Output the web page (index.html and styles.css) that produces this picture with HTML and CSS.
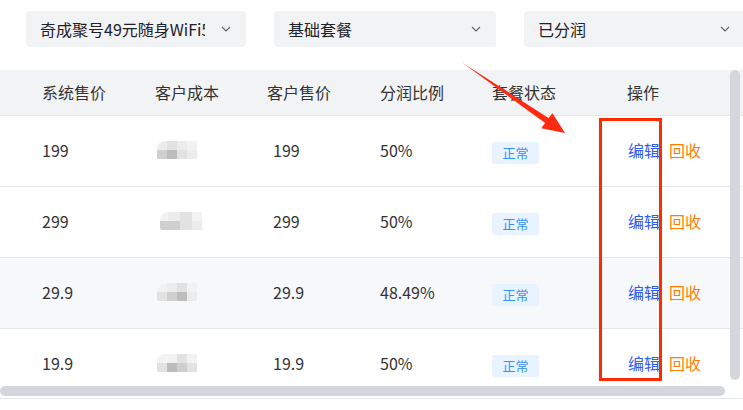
FILE: index.html
```html
<!DOCTYPE html>
<html lang="zh-CN">
<head>
<meta charset="utf-8">
<title>套餐列表</title>
<link rel="stylesheet" href="styles.css">
</head>
<body>
<div class="page">
  <div class="filters">
    <div class="select s1"><span class="select-text">奇成聚号49元随身WiFi5G套餐</span><svg class="chev" viewBox="0 0 10 6" width="10" height="6"><path d="M1 1l4 4 4-4" fill="none" stroke="#666" stroke-width="1.2"/></svg></div>
    <div class="select s2"><span class="select-text">基础套餐</span><svg class="chev" viewBox="0 0 10 6" width="10" height="6"><path d="M1 1l4 4 4-4" fill="none" stroke="#666" stroke-width="1.2"/></svg></div>
    <div class="select s3"><span class="select-text">已分润</span><svg class="chev" viewBox="0 0 10 6" width="10" height="6"><path d="M1 1l4 4 4-4" fill="none" stroke="#666" stroke-width="1.2"/></svg></div>
  </div>

  <div class="table-wrap">
    <div class="row head">
      <div class="cell">系统售价</div>
      <div class="cell">客户成本</div>
      <div class="cell">客户售价</div>
      <div class="cell">分润比例</div>
      <div class="cell">套餐状态</div>
      <div class="cell">操作</div>
    </div>
    <div class="row">
      <div class="cell">199</div>
      <div class="cell"><span class="blur b1"><i class="l"></i><i class="m"></i><i class="l"></i><i class="n"></i><i class="d"></i><i class="k"></i><i class="m"></i><i class="l"></i></span></div>
      <div class="cell shift">199</div>
      <div class="cell">50%</div>
      <div class="cell tagcell"><span class="tag">正常</span></div>
      <div class="cell ops"><span class="edit">编辑</span><span class="recycle">回收</span></div>
    </div>
    <div class="row">
      <div class="cell">299</div>
      <div class="cell"><span class="blur b2"><i class="n"></i><i class="l"></i><i class="m"></i><i class="n"></i><i class="d"></i><i class="d"></i><i class="m"></i><i class="l"></i></span></div>
      <div class="cell shift">299</div>
      <div class="cell">50%</div>
      <div class="cell tagcell"><span class="tag">正常</span></div>
      <div class="cell ops"><span class="edit">编辑</span><span class="recycle">回收</span></div>
    </div>
    <div class="row striped">
      <div class="cell">29.9</div>
      <div class="cell"><span class="blur b3"><i class="n"></i><i class="l"></i><i class="m"></i><i class="n"></i><i class="m"></i><i class="d"></i><i class="k"></i><i class="l"></i></span></div>
      <div class="cell shift">29.9</div>
      <div class="cell">48.49%</div>
      <div class="cell tagcell"><span class="tag">正常</span></div>
      <div class="cell ops"><span class="edit">编辑</span><span class="recycle">回收</span></div>
    </div>
    <div class="row">
      <div class="cell">19.9</div>
      <div class="cell"><span class="blur b4"><i class="n"></i><i class="n"></i><i class="m"></i><i class="n"></i><i class="m"></i><i class="k"></i><i class="d"></i><i class="m"></i></span></div>
      <div class="cell shift">19.9</div>
      <div class="cell">50%</div>
      <div class="cell tagcell"><span class="tag">正常</span></div>
      <div class="cell ops"><span class="edit">编辑</span><span class="recycle">回收</span></div>
    </div>
    <div class="hscroll"></div>
    <div class="vscroll"></div>
  </div>

  <div class="highlight"></div>
  <svg class="arrow" width="743" height="410" viewBox="0 0 743 410">
    <polygon points="462,62.5 548.5,118.1 552.5,113.2 565,133 541.2,128.2 545.1,123.1" fill="#ff2a10"/>
  </svg>
</div>
</body>
</html>
```

FILE: styles.css
```css
html, body {
  margin: 0;
  padding: 0;
  background: #fff;
  overflow: hidden;
}
.page {
  position: relative;
  width: 743px;
  height: 410px;
  font-family: "Noto Sans CJK SC", "Noto Sans", sans-serif;
  color: #333;
  font-size: 16px;
}
.filters {
  display: flex;
  padding: 11px 0 0 26px;
  gap: 28px;
  white-space: nowrap;
}
.select {
  flex: none;
  height: 36px;
  background: #f2f3f5;
  border-radius: 4px;
  display: flex;
  align-items: center;
  padding: 0 15px 0 14px;
  box-sizing: border-box;
  color: #1d2129;
}
.s1 { width: 220px; }
.s2 { width: 222px; }
.s3 { width: 222px; padding-right: 16px; }
.select-text {
  flex: 1;
  overflow: hidden;
  white-space: nowrap;
  margin-right: 16px;
}
.s1 .select-text { max-width: 166px; }
.chev { flex: none; }

.table-wrap {
  position: relative;
  margin-top: 23px;
  height: 328px;
  overflow: hidden;
  border-bottom: 1px solid #e5e6eb;
}
.row {
  display: grid;
  grid-template-columns: 113px 112px 113px 112px 135px 1fr;
  padding-left: 42px;
  height: 71px;
  box-sizing: border-box;
  border-bottom: 1px solid #e5e6eb;
  align-items: center;
}
.row.head {
  height: 46px;
  background: #f2f3f5;
}
.row.head .cell { padding-bottom: 2px; }
.row.striped { background: #f7f8fa; }
.cell {
  white-space: nowrap;
  line-height: 20px;
}
.row:not(.head) .cell { padding-bottom: 2px; }
.row:not(.head) .tagcell { padding-bottom: 0; padding-top: 1px; }
.shift { padding-left: 6px; }
.tag {
  display: inline-block;
  width: 47px;
  height: 22px;
  line-height: 22px;
  text-align: center;
  font-size: 13px;
  color: #3491fa;
  background: #e8f3ff;
  border-radius: 3px;
  margin-top: 2px;
}
.ops { padding-left: 1px; display: flex; gap: 9px; }
.edit { color: #2d5cf6; }
.recycle { color: #ff7d00; }

.blur {
  display: grid;
  grid-template-columns: repeat(4, 10px);
  grid-template-rows: 9px 9px;
  margin-left: 2px;
  filter: blur(0.6px);
  border-radius: 8px 10px 8px 2px;
  overflow: hidden;
}
.blur i { display: block; }
.blur .n { background: #f2f2f2; }
.blur .l { background: #ececec; }
.blur .m { background: #e2e2e2; }
.blur .d { background: #cfcfcf; }
.blur .k { background: #bdbdbd; }
.b2 { margin-left: 5px; grid-template-columns: 8px 12px 12px 10px; }
.b3 { border-radius: 10px 6px 2px 2px; }

.hscroll {
  position: absolute;
  left: 0;
  top: 316px;
  width: 725px;
  height: 10px;
  border-radius: 5px;
  background: #d3d6dd;
}
.vscroll {
  position: absolute;
  left: 730px;
  top: 0;
  width: 10px;
  height: 310px;
  border-radius: 5px;
  background: #d3d6dd;
}
.highlight {
  position: absolute;
  left: 599px;
  top: 118px;
  width: 63px;
  height: 263px;
  box-sizing: border-box;
  border: 3px solid #ff2a00;
}
.arrow {
  position: absolute;
  left: 0;
  top: 0;
  pointer-events: none;
}
```
